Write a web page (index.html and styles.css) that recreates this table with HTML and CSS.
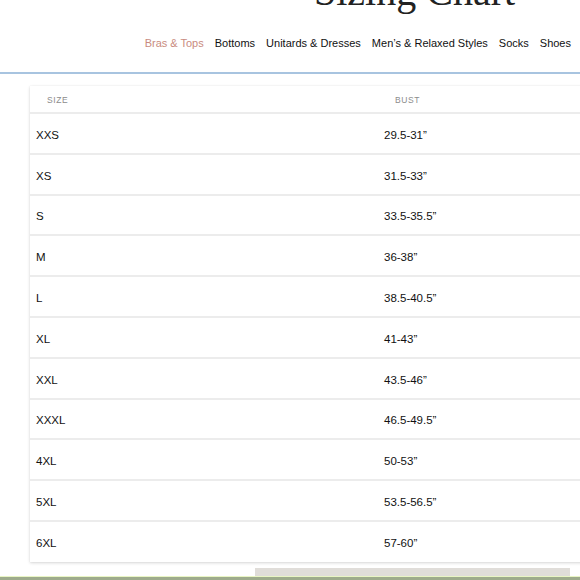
FILE: index.html
```html
<!DOCTYPE html>
<html>
<head>
<meta charset="utf-8">
<link rel="stylesheet" href="styles.css">
</head>
<body>
<header class="top">
  <h1 class="title">Sizing Chart</h1>
  <nav class="tabs">
    <a class="tab active">Bras &amp; Tops</a>
    <a class="tab">Bottoms</a>
    <a class="tab">Unitards &amp; Dresses</a>
    <a class="tab">Men’s &amp; Relaxed Styles</a>
    <a class="tab">Socks</a>
    <a class="tab">Shoes</a>
  </nav>
</header>
<div class="rule"></div>
<main class="chart">
  <div class="card">
    <div class="head"><span>Size</span><span>Bust</span></div>
    <div class="row"><span>XXS</span><span>29.5-31”</span></div>
    <div class="row"><span>XS</span><span>31.5-33”</span></div>
    <div class="row"><span>S</span><span>33.5-35.5”</span></div>
    <div class="row"><span>M</span><span>36-38”</span></div>
    <div class="row"><span>L</span><span>38.5-40.5”</span></div>
    <div class="row"><span>XL</span><span>41-43”</span></div>
    <div class="row"><span>XXL</span><span>43.5-46”</span></div>
    <div class="row"><span>XXXL</span><span>46.5-49.5”</span></div>
    <div class="row"><span>4XL</span><span>50-53”</span></div>
    <div class="row"><span>5XL</span><span>53.5-56.5”</span></div>
    <div class="row last"><span>6XL</span><span>57-60”</span></div>
  </div>
</main>
<div class="foot"><div class="scroll"></div></div>
<div class="green"></div>
</body>
</html>
```
FILE: styles.css
```css
*, *::before, *::after {
  box-sizing: border-box;
}
html, body {
  margin: 0;
  padding: 0;
  background: #ffffff;
  overflow: hidden;
  width: 580px;
  height: 580px;
}
body {
  font-family: "Liberation Sans", Arial, sans-serif;
  color: #1c1c1c;
}
.top {
  display: flex;
  flex-direction: column;
}
.title {
  margin: -28px 0 0 0;
  padding-left: 314px;
  height: 40px;
  line-height: 40px;
  font-family: "Liberation Serif", "Times New Roman", serif;
  font-weight: normal;
  font-size: 40px;
  color: #222;
  white-space: nowrap;
}
.tabs {
  margin-top: 24px;
  display: flex;
  justify-content: flex-end;
  gap: 11px;
  padding-right: 9px;
  height: 14px;
  line-height: 14px;
  font-size: 11px;
  white-space: nowrap;
}
.tab {
  color: #111;
}
.tab.active {
  color: #c98b80;
}
.rule {
  margin-top: 22px;
  height: 2px;
  background: #a8c4e0;
}
.chart {
  margin-top: 12px;
  padding-left: 30px;
}
.card {
  width: 600px;
  background: #fff;
  box-shadow: 0 1px 3px rgba(0, 0, 0, 0.16), 0 0 1px rgba(0, 0, 0, 0.08);
}
.head {
  height: 28px;
  display: grid;
  grid-template-columns: 348px 1fr;
  align-items: center;
  padding-left: 17px;
  padding-top: 1px;
  font-size: 8.5px;
  letter-spacing: 0.6px;
  text-transform: uppercase;
  color: #8c8c8c;
  border-bottom: 2px solid #ececec;
}
.row {
  height: 40.8px;
  padding-top: 3px;
  display: grid;
  grid-template-columns: 348px 1fr;
  align-items: center;
  padding-left: 6px;
  font-size: 11.5px;
  color: #111;
  border-bottom: 2px solid #ececec;
}
.row.last {
  border-bottom: none;
  height: 40px;
  padding-top: 2px;
}
.foot {
  margin-top: 6px;
  height: 8px;
  padding-left: 255px;
}
.scroll {
  width: 315px;
  height: 8px;
  background: #e0ddd9;
}
.green {
  height: 4px;
  background: #e9f5c4;
  border-bottom: 3px solid #9eab8c;
}
```
